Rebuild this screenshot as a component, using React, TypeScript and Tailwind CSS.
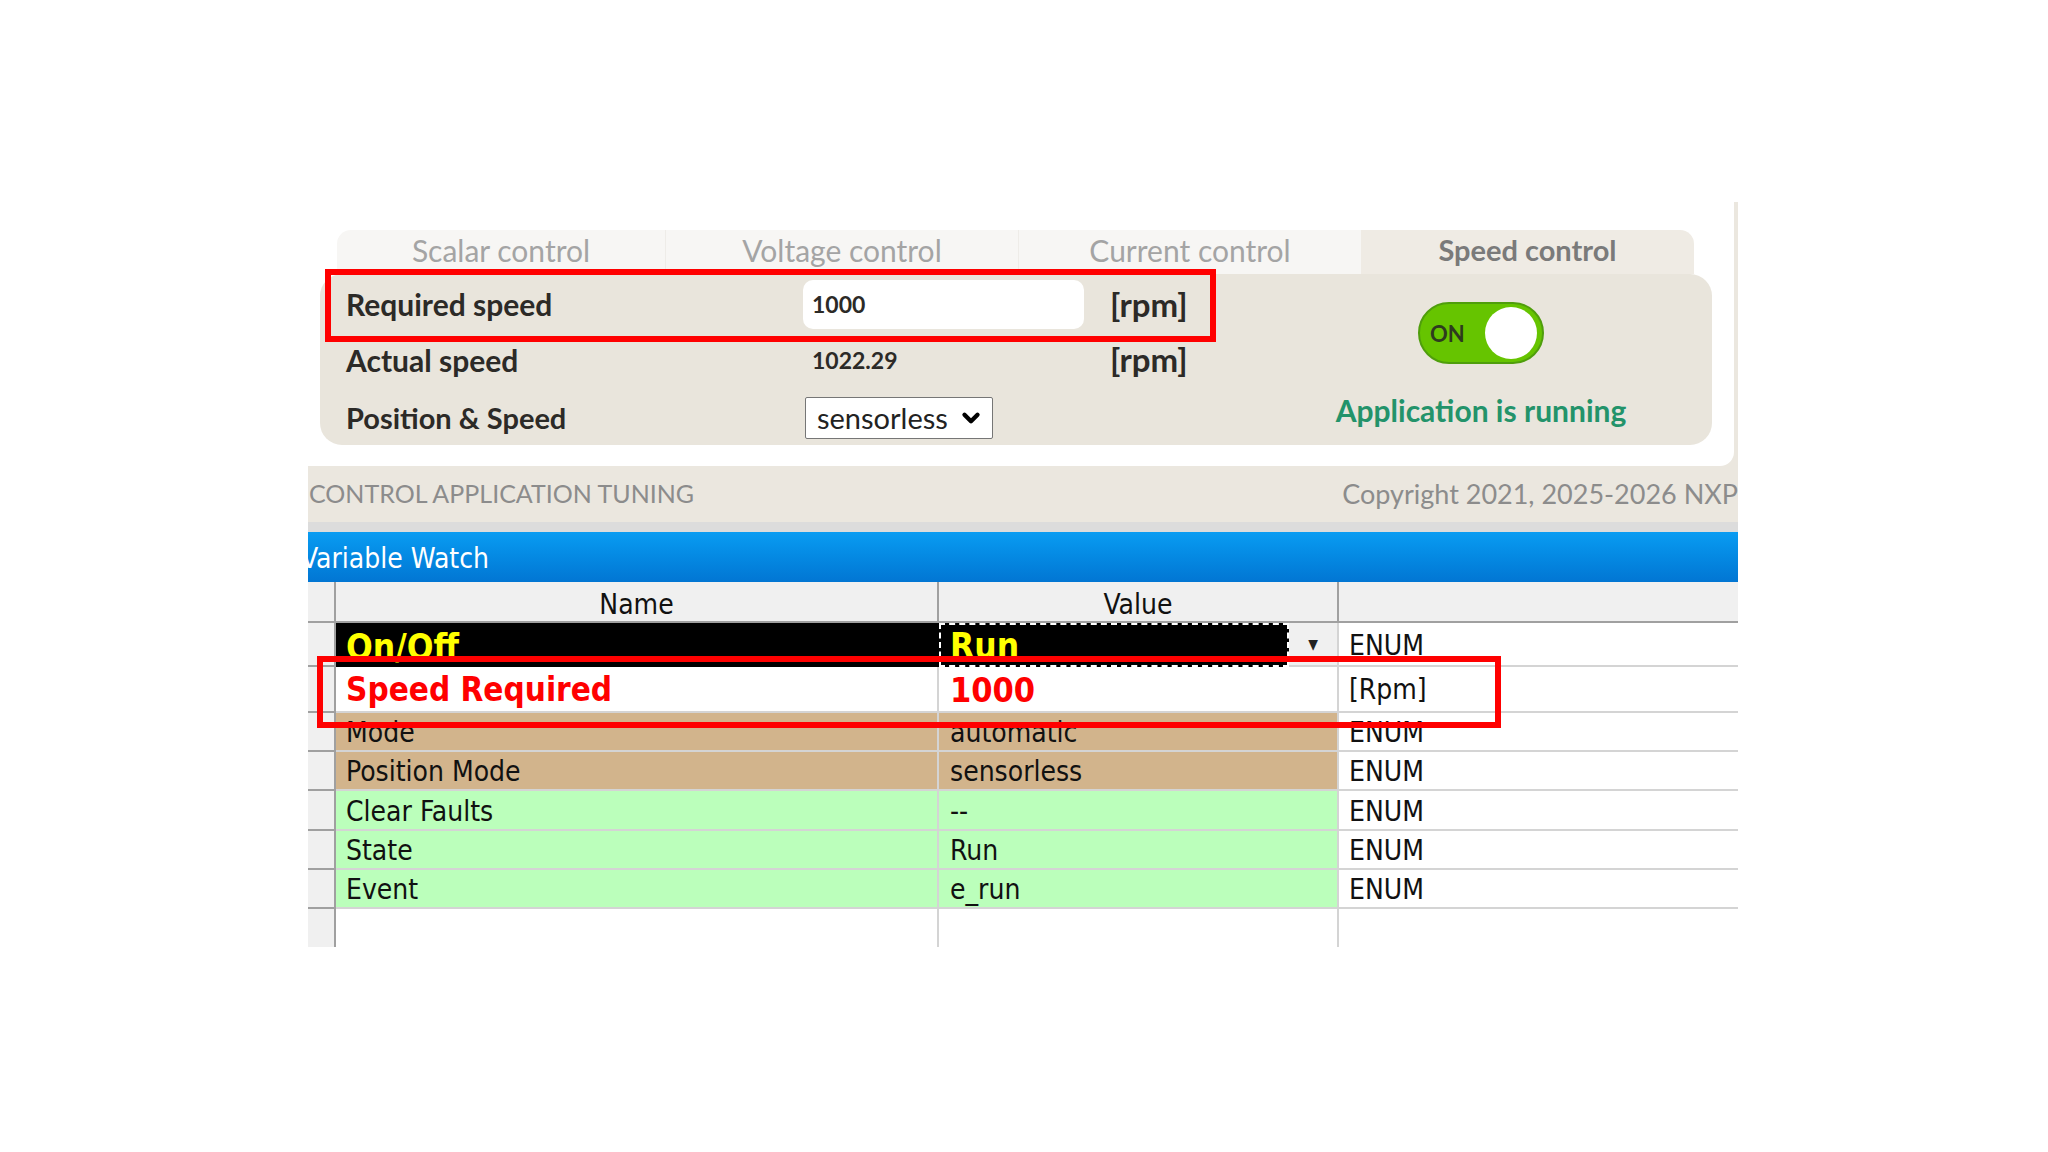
import { ChevronDown } from "lucide-react";

const tf = "font-['DejaVu_Sans_Condensed','DejaVu_Sans',sans-serif] font-stretch-condensed";

type Row = {
  name: string;
  value: string;
  unit: string;
  h: string;
  bg: string;
};

const rows: Row[] = [
  { name: "Mode", value: "automatic", unit: "ENUM", h: "h-[39px]", bg: "bg-[#d2b48c]" },
  { name: "Position Mode", value: "sensorless", unit: "ENUM", h: "h-[39px]", bg: "bg-[#d2b48c]" },
  { name: "Clear Faults", value: "--", unit: "ENUM", h: "h-[40px]", bg: "bg-[#bbffbb]" },
  { name: "State", value: "Run", unit: "ENUM", h: "h-[39px]", bg: "bg-[#bbffbb]" },
  { name: "Event", value: "e_run", unit: "ENUM", h: "h-[39px]", bg: "bg-[#bbffbb]" },
];

function RowHead({ h }: { h: string }) {
  return <div className={`${h} w-[28px] shrink-0 border-b-2 border-r-2 border-[#a0a0a0] bg-[#f0f0f0]`} />;
}

export default function App() {
  return (
    <div className="min-h-screen w-full bg-white pl-[308px] pt-[202px]">
      <div className="relative w-[1430px]">
        {/* application section */}
        <div className="bg-[#ebe7df]">
          <div className="mr-[4px] h-[264px] rounded-br-[14px] bg-white pl-[12px] pt-[28px]">
            {/* tabs */}
            <div className="ml-[17px] flex h-[44px] w-[1357px] font-['Lato',sans-serif] text-[30px] leading-[30px]">
              <div className="flex w-[329px] items-center justify-center rounded-tl-[14px] border-r border-[#eeece8] bg-[#f7f6f4] pb-[4px] text-[#a4a4a4]">
                Scalar control
              </div>
              <div className="flex w-[353px] items-center justify-center border-r border-[#eeece8] bg-[#f7f6f4] pb-[4px] text-[#a4a4a4]">
                Voltage control
              </div>
              <div className="flex w-[342px] items-center justify-center bg-[#f7f6f4] pb-[4px] text-[#a4a4a4]">
                Current control
              </div>
              <div className="flex w-[333px] items-center justify-center rounded-tr-[14px] bg-[#efebe4] pb-[4px] text-[29px] font-bold text-[#7a7a7a]">
                Speed control
              </div>
            </div>
            {/* panel */}
            <div className="flex h-[171px] w-[1392px] rounded-[22px] bg-[#e9e5dc] font-['Lato',sans-serif] text-[#2c2a27]">
              <div className="w-[930px] pl-[26px] pt-[6px]">
                <div className="flex h-[49px] items-center">
                  <div className="w-[457px] text-[30px] font-bold">Required speed</div>
                  <div className="flex h-[49px] w-[281px] items-center rounded-[10px] bg-white pl-[9px] text-[23px] font-bold">
                    1000
                  </div>
                  <div className="ml-[26px] text-[33px] font-bold">[rpm]</div>
                </div>
                <div className="flex h-[62px] items-center">
                  <div className="w-[457px] text-[30px] font-bold">Actual speed</div>
                  <div className="w-[307px] pl-[9px] text-[23px] font-bold">1022.29</div>
                  <div className="text-[33px] font-bold">[rpm]</div>
                </div>
                <div className="mt-[6px] flex h-[42px] items-center">
                  <div className="w-[459px] text-[29px] font-bold">Position &amp; Speed</div>
                  <div className="flex h-[42px] w-[188px] items-center justify-between rounded-[2px] border border-[#767676] bg-white pl-[11px] pr-[8px] text-[29px] text-[#222]">
                    <span>sensorless</span>
                    <ChevronDown size={26} strokeWidth={4} className="text-black" />
                  </div>
                </div>
              </div>
              <div className="flex flex-1 flex-col items-center pt-[28px]">
                <div className="flex h-[62px] w-[126px] items-center justify-between rounded-full border-2 border-[#4f9e0c] bg-[#66c400] pl-[10px] pr-[5px]">
                  <span className="text-[22px] font-bold text-[#2e3b1f]">ON</span>
                  <div className="h-[52px] w-[52px] rounded-full bg-white" />
                </div>
                <div className="mt-[32px] text-[30px] font-bold leading-[28px] text-[#23936a]">Application is running</div>
              </div>
            </div>
          </div>
          {/* footer */}
          <div className="flex h-[56px] items-center justify-between pl-[1px] font-['Lato',sans-serif] text-[#8c8c8c]">
            <span className="text-[25px]">CONTROL APPLICATION TUNING</span>
            <span className="text-[27px]">Copyright 2021, 2025-2026 NXP</span>
          </div>
        </div>
        <div className="h-[10px] bg-[#dcdcdc]" />
        {/* variable watch */}
        <div className={`flex h-[50px] items-center overflow-hidden bg-gradient-to-b from-[#0a9cf2] to-[#0276d3] pt-[3px] text-[28px] text-white ${tf}`}>
          <span className="-ml-[7px]">Variable Watch</span>
        </div>
        <div className={`${tf} text-[28px] text-[#111]`}>
          {/* header */}
          <div className="flex h-[41px] bg-[#f0f0f0]">
            <div className="w-[28px] border-b-2 border-r-2 border-[#a0a0a0]" />
            <div className="flex w-[603px] items-center justify-center border-b-2 border-r-2 border-[#a0a0a0] pt-[7px]">Name</div>
            <div className="flex w-[400px] items-center justify-center border-b-2 border-r-2 border-[#a0a0a0] pt-[7px]">Value</div>
            <div className="flex-1 border-b-2 border-[#a0a0a0]" />
          </div>
          {/* On/Off */}
          <div className="flex h-[44px]">
            <RowHead h="h-[44px]" />
            <div className="flex w-[603px] items-center overflow-hidden bg-black pl-[10px] pt-[4px] text-[35px] font-bold text-[#ffff00]">On/Off</div>
            <div className="flex w-[350px] items-center overflow-hidden border-2 border-dashed border-white bg-black pl-[9px] pt-[2px] text-[35px] font-bold text-[#ffff00]">Run</div>
            <div className="flex w-[50px] items-center justify-center border-b-2 border-r-2 border-[#d4d4d4] bg-[#f0f0f0] text-[14px] text-[#222]">▼</div>
            <div className="flex flex-1 items-center border-b-2 border-[#d4d4d4] bg-white pl-[10px] pt-[3px]">ENUM</div>
          </div>
          {/* Speed Required */}
          <div className="flex h-[46px]">
            <RowHead h="h-[46px]" />
            <div className="flex w-[603px] items-center border-b-2 border-r-2 border-[#d4d4d4] bg-white pl-[10px] pt-[2px] text-[33px] font-bold text-[#ff0000]">Speed Required</div>
            <div className="flex w-[400px] items-center border-b-2 border-r-2 border-[#d4d4d4] bg-white pl-[11px] pt-[2px] text-[34px] font-bold text-[#ff0000]">1000</div>
            <div className="flex flex-1 items-center border-b-2 border-[#d4d4d4] bg-white pl-[10px] pt-[2px]">[Rpm]</div>
          </div>
          {rows.map((r) => (
            <div key={r.name} className={`flex ${r.h}`}>
              <RowHead h={r.h} />
              <div className={`flex w-[603px] items-center border-b-2 border-r-2 border-[#d4d4d4] pl-[10px] pt-[3px] ${r.bg}`}>{r.name}</div>
              <div className={`flex w-[400px] items-center border-b-2 border-r-2 border-[#d4d4d4] pl-[11px] pt-[3px] ${r.bg}`}>{r.value}</div>
              <div className="flex flex-1 items-center border-b-2 border-[#d4d4d4] bg-white pl-[10px] pt-[3px]">{r.unit}</div>
            </div>
          ))}
          {/* blank row */}
          <div className="flex h-[38px]">
            <div className="h-[38px] w-[28px] border-r-2 border-[#a0a0a0] bg-[#f0f0f0]" />
            <div className="w-[603px] border-r-2 border-[#d4d4d4] bg-white" />
            <div className="w-[400px] border-r-2 border-[#d4d4d4] bg-white" />
            <div className="flex-1 bg-white" />
          </div>
        </div>

        {/* annotation boxes */}
        <div className="pointer-events-none absolute left-[17px] top-[67px] h-[73px] w-[891px] border-[6px] border-[#ff0000]" />
        <div className="pointer-events-none absolute left-[9px] top-[454px] h-[72px] w-[1184px] border-[6px] border-[#ff0000]" />
      </div>
    </div>
  );
}
